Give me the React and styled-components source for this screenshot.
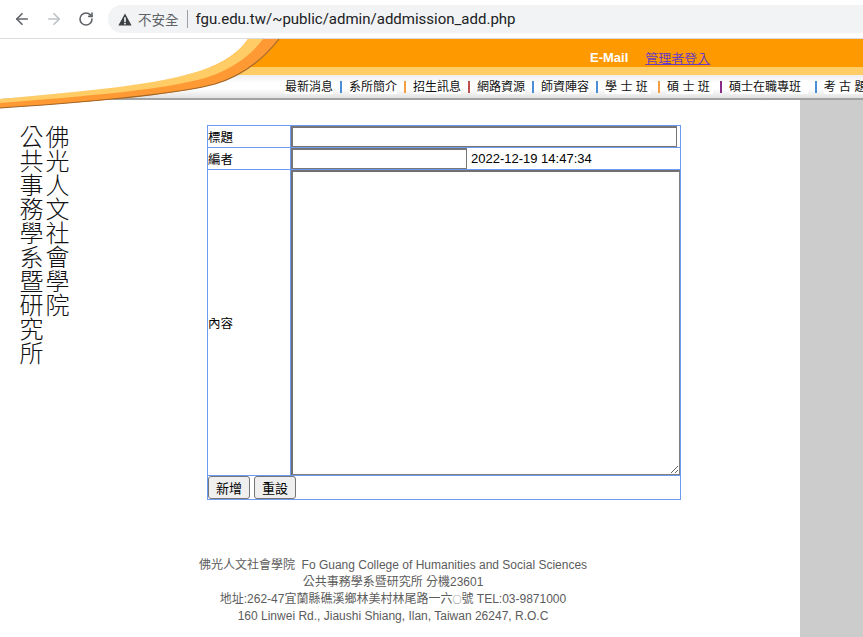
import styled, { createGlobalStyle } from "styled-components"
import { ArrowLeft, ArrowRight, RotateCw } from "lucide-react"

const GlobalStyle = createGlobalStyle`
    html, body {
        margin: 0;
        padding: 0;
    }
    body {
        font-family: "Liberation Sans", "Noto Sans CJK TC", sans-serif;
        background: #fff;
    }
    #root {
        min-height: 100vh;
        display: flex;
        flex-direction: column;
    }
`

/* browser chrome */

const Chrome = styled.div`
    height: 38px;
    border-bottom: 1px solid #dadce0;
    display: flex;
    align-items: center;
    padding: 0 0 0 6px;
    background: #fff;
    flex-shrink: 0;
`

const NavButton = styled.div`
    width: 32px;
    height: 32px;
    display: flex;
    align-items: center;
    justify-content: center;
    color: ${(p) => (p.$disabled ? "#bdc1c6" : "#5f6368")};
`

const UrlPill = styled.div`
    flex: 1;
    height: 28px;
    margin-left: 6px;
    border-radius: 14px 0 0 14px;
    background: #f1f3f4;
    display: flex;
    align-items: center;
    padding-left: 10px;
`

const Insecure = styled.span`
    font-family: "Noto Sans CJK TC", sans-serif;
    font-size: 13.5px;
    color: #5f6368;
    margin-left: 6px;
`

const UrlDivider = styled.span`
    width: 1px;
    height: 18px;
    background: #9aa0a6;
    margin: 0 8px 0 8px;
`

const UrlText = styled.span`
    font-family: Roboto, "Liberation Sans", sans-serif;
    font-size: 15px;
    color: #202124;
`

/* site header */

const Header = styled.div`
    position: relative;
    flex-shrink: 0;
`

const OrangeBar = styled.div`
    height: 28px;
    background: #ff9900;
    display: flex;
    align-items: flex-end;
    padding: 0 0 2px 590px;
    box-sizing: border-box;
    line-height: 15px;
`

const Mail = styled.span`
    color: #fff;
    font-weight: 700;
    font-size: 13px;
`

const AdminLink = styled.a`
    margin-left: 17px;
    color: #6a3cc0;
    font-size: 13px;
    font-family: "Noto Sans CJK TC", sans-serif;
    text-decoration: underline;
`

const Strip = styled.div`
    height: 8px;
    background: #ffcc66;
`

const NavBar = styled.div`
    height: 23px;
    border-bottom: 2px solid #a3a3a3;
    background: linear-gradient(#eeeeee, #ffffff 35%, #ffffff 60%, #e2e2e2);
    display: flex;
    align-items: center;
    padding-left: 285px;
    white-space: pre;
    overflow: hidden;
`

const NavItem = styled.span`
    font-family: "Liberation Sans", "Noto Sans CJK TC", sans-serif;
    font-size: 12px;
    color: #111;
    line-height: 14px;
    background: #fff;
    flex-shrink: 0;
`

const NavSep = styled.span`
    width: 2px;
    height: 12px;
    margin: 0 7px;
    flex-shrink: 0;
    background: ${(p) => p.$color};
`

const Wave = styled.svg`
    position: absolute;
    left: 0;
    top: 0;
    overflow: visible;
`

/* page body */

const Body = styled.div`
    flex: 1;
    display: flex;
`

const Main = styled.div`
    width: 800px;
    background: #fff;
    display: flex;
    flex-direction: column;
`

const Side = styled.div`
    flex: 1;
    background: #cccccc;
`

const ContentRow = styled.div`
    display: flex;
    align-items: flex-start;
    padding-top: 25px;
`

const College = styled.div`
    writing-mode: vertical-rl;
    font-family: "Noto Sans CJK TC", sans-serif;
    font-weight: 300;
    font-size: 24px;
    line-height: 26px;
    color: #111;
    margin-left: 18px;
`

const CollegeLine = styled.span`
    display: block;
`

const FormTable = styled.table`
    margin-left: 137px;
    width: 474px;
    border-collapse: collapse;

    td {
        border: 1px solid #6f98f0;
        padding: 0;
    }
`

const Label = styled.td`
    width: 82px;
    font-family: "Noto Sans CJK TC", sans-serif;
    font-size: 12.5px;
    color: #000;
    vertical-align: middle;
`

const Field = styled.td`
    vertical-align: top;
`

const TextInput = styled.input`
    display: block;
    box-sizing: border-box;
    width: ${(p) => p.$width}px;
    height: 21px;
    margin: 0;
    padding: 1px 2px;
    border: 1px solid #767676;
    border-top-width: 2px;
    border-left-width: 2px;
    font-size: 13px;
    background: #fff;
`

const AuthorRow = styled.div`
    display: flex;
    align-items: center;
`

const Stamp = styled.span`
    margin-left: 4px;
    font-size: 13px;
    color: #000;
`

const ContentArea = styled.textarea`
    display: block;
    box-sizing: border-box;
    width: 100%;
    height: 305px;
    margin: 0;
    border: 1px solid #808080;
    border-top: 2px solid #707070;
    border-left: 2px solid #707070;
    font-size: 13px;
    outline: none;
`

const ButtonRow = styled.div`
    display: flex;
    gap: 4px;
`

const Button = styled.button`
    height: 23px;
    padding: 0 7px;
    margin: 0;
    font-family: "Noto Sans CJK TC", sans-serif;
    font-size: 13px;
    color: #000;
    background: #efefef;
    border: 1px solid #767676;
    border-radius: 3px;
`

const Footer = styled.div`
    margin-top: 57px;
    padding-right: 14px;
    text-align: center;
    font-size: 12px;
    line-height: 17px;
    color: #5c5c5c;
`

const Ring = styled.span`
    font-family: "Noto Sans CJK TC", sans-serif;
    font-size: 9px;
`

const navItems = [
    { text: "最新消息", bar: "#4a8fd6" },
    { text: "系所簡介", bar: "#f0a040" },
    { text: "招生訊息", bar: "#c0504d" },
    { text: "網路資源", bar: "#4a8fd6" },
    { text: "師資陣容", bar: "#4a8fd6" },
    { text: "學 士 班 ", bar: "#f0a040" },
    { text: "碩 士 班 ", bar: "#8a2a8a" },
    { text: "碩士在職專班  ", bar: "#4a8fd6" },
    { text: "考 古 題" },
]

function HeaderWave() {
    return (
        <Wave width="290" height="72" viewBox="0 0 290 72">
            <path d="M0,0 H248 C240,12 225,24 200,32 C160,45 90,52 0,60 Z" fill="#ffffff" />
            <path
                d="M0,60 C90,52 160,45 200,32 C225,24 240,12 248,0 H279 C265,18 245,36 215,45 C175,56 90,63 0,69 Z"
                fill="#ffcc66"
            />
            <path
                d="M0,64 C90,57 170,50 208,38 C235,29 253,14 263,0 H279 C265,18 245,36 215,45 C175,56 90,63 0,69 Z"
                fill="#ff9933"
            />
            <path
                d="M0,69 C90,63 175,56 215,45 C245,36 265,18 279,0"
                fill="none"
                stroke="#a0662a"
                strokeWidth="1.2"
            />
        </Wave>
    )
}

export default function App() {
    return (
        <>
            <GlobalStyle />
            <Chrome>
                <NavButton><ArrowLeft size={18} strokeWidth={2.2} /></NavButton>
                <NavButton $disabled><ArrowRight size={18} strokeWidth={2.2} /></NavButton>
                <NavButton><RotateCw size={16} strokeWidth={2.4} /></NavButton>
                <UrlPill>
                    <svg width="14" height="13" viewBox="0 0 14 13">
                        <path d="M7,0.5 L13.6,12.5 H0.4 Z" fill="#3c4043" />
                        <rect x="6.2" y="4.3" width="1.6" height="4.6" fill="#fff" />
                        <rect x="6.2" y="9.8" width="1.6" height="1.6" fill="#fff" />
                    </svg>
                    <Insecure>不安全</Insecure>
                    <UrlDivider />
                    <UrlText>fgu.edu.tw/~public/admin/addmission_add.php</UrlText>
                </UrlPill>
            </Chrome>

            <Header>
                <OrangeBar>
                    <Mail>E-Mail</Mail>
                    <AdminLink href="#">管理者登入</AdminLink>
                </OrangeBar>
                <Strip />
                <NavBar>
                    {navItems.map((item) => (
                        <>
                            <NavItem key={item.text}>{item.text}</NavItem>
                            {item.bar && <NavSep $color={item.bar} />}
                        </>
                    ))}
                </NavBar>
                <HeaderWave />
            </Header>

            <Body>
                <Main>
                    <ContentRow>
                        <College>
                            <CollegeLine>佛光人文社會學院</CollegeLine>
                            <CollegeLine>公共事務學系暨研究所</CollegeLine>
                        </College>
                        <FormTable>
                            <tbody>
                                <tr>
                                    <Label>標題</Label>
                                    <Field><TextInput $width={386} /></Field>
                                </tr>
                                <tr>
                                    <Label>編者</Label>
                                    <Field>
                                        <AuthorRow>
                                            <TextInput $width={176} />
                                            <Stamp>2022-12-19 14:47:34</Stamp>
                                        </AuthorRow>
                                    </Field>
                                </tr>
                                <tr>
                                    <Label>內容</Label>
                                    <Field><ContentArea /></Field>
                                </tr>
                                <tr>
                                    <td colSpan={2}>
                                        <ButtonRow>
                                            <Button>新增</Button>
                                            <Button>重設</Button>
                                        </ButtonRow>
                                    </td>
                                </tr>
                            </tbody>
                        </FormTable>
                    </ContentRow>
                    <Footer>
                        <div>佛光人文社會學院&nbsp; Fo Guang College of Humanities and Social Sciences</div>
                        <div>公共事務學系暨研究所 分機23601</div>
                        <div>地址:262-47宜蘭縣礁溪鄉林美村林尾路一六<Ring>○</Ring>號 TEL:03-9871000</div>
                        <div>160 Linwei Rd., Jiaushi Shiang, Ilan, Taiwan 26247, R.O.C</div>
                    </Footer>
                </Main>
                <Side />
            </Body>
        </>
    )
}
